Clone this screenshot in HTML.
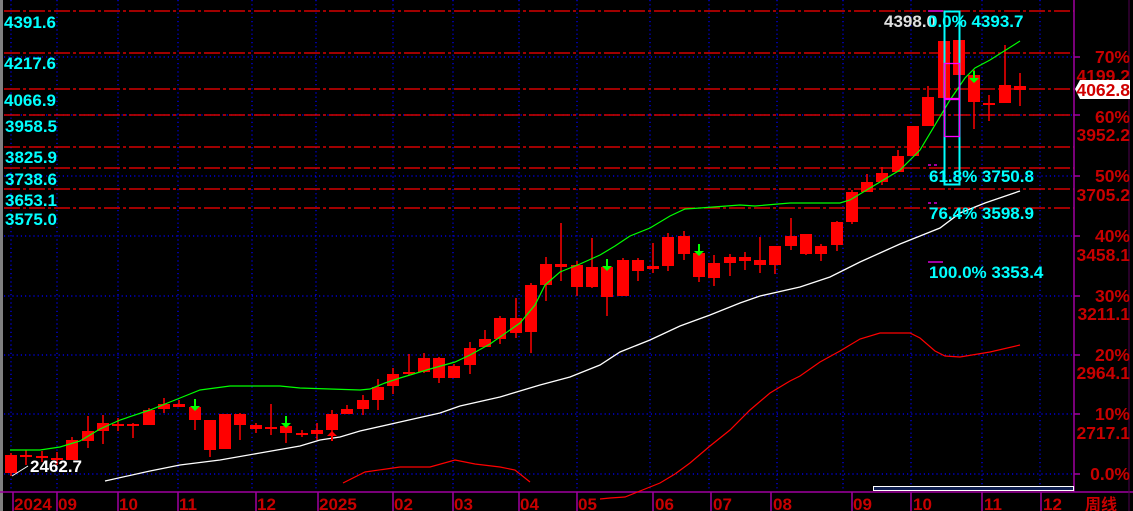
<!DOCTYPE html>
<html><head><meta charset="utf-8"><style>
body{margin:0;background:#000;width:1133px;height:511px;overflow:hidden}
svg{display:block}
text{font-family:"Liberation Sans","Noto Sans CJK SC",sans-serif;font-weight:bold}
.c{fill:#00ffff;font-size:17px}
.r{fill:#c80000;font-size:17.5px;text-anchor:end}
.m{fill:#c80000;font-size:17px}
</style></head><body>
<svg width="1133" height="511" viewBox="0 0 1133 511" xmlns="http://www.w3.org/2000/svg">
<rect width="1133" height="511" fill="#000"/>
<rect x="0" y="0" width="3" height="511" fill="#808080"/>
<g stroke="#0000ff" stroke-width="1.2" stroke-dasharray="1.2,3">
<path d="M4 57H1074M4 115H1074M4 176H1074M4 236H1074M4 296H1074M4 355H1074M4 414H1074M4 474H1074"/>
<path d="M11 0V492M57 0V492M118 0V492M178 0V492M252 0V492M316 0V492M393 0V492M453 0V492M519 0V492M577 0V492M650 0V492M709 0V492M777 0V492M843 0V492M911 0V492M982 0V492M1040 0V492"/>
</g>
<g stroke="#ff0000" stroke-width="1.3" stroke-dasharray="16,3,3,3">
<path d="M4 11H1074M4 53H1074M4 89H1074M4 115H1074M4 147H1074M4 168H1074M4 189H1074M4 208H1074"/>
</g>
<path d="M1074 0V492M0 492H1133" stroke="#a000a0" stroke-width="1.5"/>
<path d="M1129 0V511" stroke="#500050" stroke-width="1"/>
<g stroke="#a000a0" stroke-width="1.5"><path d="M1074 57h6M1074 115h6M1074 176h6M1074 236h6M1074 296h6M1074 355h6M1074 414h6M1074 474h6"/>
<path d="M13 492v19M57 492v19M118 492v19M178 492v19M256 492v19M318 492v19M393 492v19M453 492v19M519 492v19M577 492v19M653 492v19M711 492v19M771 492v19M852 492v19M911 492v19M982 492v19M1041 492v19"/></g>
<polyline fill="none" stroke="#ff0000" stroke-width="1.2" points="343,483 365,472 400,467 430,467 455,460 475,464 500,467 515,470 530,482"/>
<polyline fill="none" stroke="#ff0000" stroke-width="1.2" points="600,499 610,498 625,497 640,491 660,483 675,474 690,463 710,446 730,430 750,410 770,393 790,381 800,376 820,362 840,351 860,339 880,333 910,333 920,338 935,351 945,356 960,357 990,352 1020,345"/>
<polyline fill="none" stroke="#fff" stroke-width="1.3" points="105,481 150,471 180,465 220,460 260,453 300,446 320,440 340,437 360,431 400,422 440,413 460,406 500,397 540,385 570,377 600,365 620,352 650,340 680,326 710,315 740,303 760,296 800,287 830,277 860,262 880,253 900,244 920,236 940,228 960,213 985,203 1020,191"/>
<g fill="#ff0000" stroke="#ff0000" stroke-width="1.5">
<path d="M11 453V476M26 450V465M42 451V462M57 452V465M72 437V460M88 416V448M103 415V444M118 418V431M133 423V438M149 408V425M164 398V413M179 400V407M195 400V430M210 420V457M225 414V449M240 413V440M256 423V433M271 404V435M286 419V443M302 430V437M317 423V440M332 410V441M347 405V414M363 395V415M378 379V410M393 368V394M409 354V375M424 353V373M439 357V383M454 364V378M470 342V374M485 330V347M500 316V344M516 298V338M531 283V353M546 257V301M561 223V281M577 261V296M592 238V288M607 266V316M623 258V296M638 258V281M653 243V273M668 233V271M684 231V260M699 253V282M714 255V286M730 254V276M745 252V270M760 237V273M775 246V274M791 218V250M806 234V255M821 244V261M837 221V251M852 190V224M867 174V192M882 167V185M898 150V172M913 126V156M928 86V126M944 41V98M959 40V75M974 70V129M989 95V121M1005 45V103M1020 73V106"/>
</g>
<g fill="#ff0000">
<rect x="5" y="455" width="12" height="18"/><rect x="20" y="455" width="12" height="2"/><rect x="36" y="456" width="12" height="2"/><rect x="51" y="458" width="12" height="2"/><rect x="66" y="440" width="12" height="20"/><rect x="82" y="431" width="12" height="10"/><rect x="97" y="423" width="12" height="8"/><rect x="112" y="424" width="12" height="2"/><rect x="127" y="424" width="12" height="2"/><rect x="143" y="410" width="12" height="15"/><rect x="158" y="404" width="12" height="5"/><rect x="173" y="404" width="12" height="3"/><rect x="189" y="407" width="12" height="13"/><rect x="204" y="420" width="12" height="30"/><rect x="219" y="414" width="12" height="35"/><rect x="234" y="414" width="12" height="11"/><rect x="250" y="425" width="12" height="4"/><rect x="265" y="427" width="12" height="2"/><rect x="280" y="426" width="12" height="7"/><rect x="296" y="433" width="12" height="2"/><rect x="311" y="430" width="12" height="4"/><rect x="326" y="414" width="12" height="16"/><rect x="341" y="409" width="12" height="5"/><rect x="357" y="400" width="12" height="9"/><rect x="372" y="387" width="12" height="13"/><rect x="387" y="374" width="12" height="12"/><rect x="403" y="372" width="12" height="2"/><rect x="418" y="358" width="12" height="14"/><rect x="433" y="358" width="12" height="20"/><rect x="448" y="366" width="12" height="12"/><rect x="464" y="348" width="12" height="17"/><rect x="479" y="339" width="12" height="8"/><rect x="494" y="318" width="12" height="21"/><rect x="510" y="318" width="12" height="15"/><rect x="525" y="285" width="12" height="47"/><rect x="540" y="264" width="12" height="21"/><rect x="555" y="264" width="12" height="3"/><rect x="571" y="265" width="12" height="22"/><rect x="586" y="267" width="12" height="20"/><rect x="601" y="267" width="12" height="30"/><rect x="617" y="260" width="12" height="36"/><rect x="632" y="260" width="12" height="11"/><rect x="647" y="266" width="12" height="3"/><rect x="662" y="237" width="12" height="29"/><rect x="678" y="236" width="12" height="18"/><rect x="693" y="253" width="12" height="24"/><rect x="708" y="263" width="12" height="15"/><rect x="724" y="257" width="12" height="6"/><rect x="739" y="257" width="12" height="4"/><rect x="754" y="260" width="12" height="5"/><rect x="769" y="246" width="12" height="19"/><rect x="785" y="236" width="12" height="10"/><rect x="800" y="234" width="12" height="20"/><rect x="815" y="246" width="12" height="8"/><rect x="831" y="222" width="12" height="23"/><rect x="846" y="192" width="12" height="30"/><rect x="861" y="182" width="12" height="10"/><rect x="876" y="173" width="12" height="9"/><rect x="892" y="156" width="12" height="16"/><rect x="907" y="126" width="12" height="30"/><rect x="922" y="97" width="12" height="29"/><rect x="938" y="41" width="12" height="57"/><rect x="953" y="40" width="12" height="35"/><rect x="968" y="75" width="12" height="27"/><rect x="983" y="103" width="12" height="2"/><rect x="999" y="85" width="12" height="18"/><rect x="1014" y="86" width="12" height="4"/>
</g>
<polyline fill="none" stroke="#00ff00" stroke-width="1.2" points="10,450 40,450 60,447 80,441 100,429 120,420 150,410 180,398 200,390 230,386 280,386 300,388 360,390 370,389 385,383 400,378 430,369 455,362 470,355 490,344 510,330 520,323 535,305 545,285 560,272 580,264 600,255 615,246 630,236 650,228 670,216 685,209 700,208 740,205 755,206 790,203 840,203 850,200 870,188 900,170 920,150 935,125 950,100 965,78 975,68 990,60 1020,41"/>
<g stroke="#00ff00" stroke-width="2">
<path d="M195 399V407M286 416V424M607 259V267M699 244V252M974 71V79"/>
</g>
<g fill="#00ff00"><path d="M190 406h10l-5 5zM281 423h10l-5 5zM602 266h10l-5 5zM694 251h10l-5 5zM969 78h10l-5 5z"/></g>
<path d="M332 434V441" stroke="#ff0000" stroke-width="2"/><path d="M327 436h10l-5-5z" fill="#ff0000"/>
<rect x="944.5" y="11.5" width="15" height="173" fill="none" stroke="#00ffff" stroke-width="2"/>
<rect x="944.5" y="63.5" width="15" height="35" fill="none" stroke="#ff00ff" stroke-width="1.3"/>
<rect x="944.5" y="99.5" width="15" height="37" fill="none" stroke="#ff00ff" stroke-width="1.3"/>
<path d="M928 165h10M928 203h10" stroke="#ff00ff" stroke-width="1.3" stroke-dasharray="3,3"/>
<path d="M928 262h15M928 11h15" stroke="#ff00ff" stroke-width="1.3"/>
<text class="c" x="4" y="28">4391.6</text>
<text class="c" x="4" y="69">4217.6</text>
<text class="c" x="4" y="106">4066.9</text>
<text class="c" x="5" y="132">3958.5</text>
<text class="c" x="5" y="163">3825.9</text>
<text class="c" x="5" y="185">3738.6</text>
<text class="c" x="5" y="206">3653.1</text>
<text class="c" x="5" y="225">3575.0</text>
<text x="884" y="27" fill="#e0e0e0" style="font-size:17px">4398.0</text>
<text class="c" x="928" y="27">0.0% 4393.7</text>
<text class="c" x="929" y="182">61.8% 3750.8</text>
<text class="c" x="929" y="219">76.4% 3598.9</text>
<text class="c" x="929" y="278">100.0% 3353.4</text>
<path d="M12 476L28 466" stroke="#fff" stroke-width="1"/>
<text x="30" y="472" fill="#fff" style="font-size:17px">2462.7</text>
<text class="r" x="1130" y="63">70%</text>
<text class="r" x="1130" y="82">4199.2</text>
<path d="M1075 89l5-9h50v19h-50z" fill="#fff"/>
<text class="r" x="1130" y="96" style="fill:#d00000">4062.8</text>
<text class="r" x="1130" y="123">60%</text>
<text class="r" x="1130" y="141">3952.2</text>
<text class="r" x="1130" y="182">50%</text>
<text class="r" x="1130" y="201">3705.2</text>
<text class="r" x="1130" y="242">40%</text>
<text class="r" x="1130" y="261">3458.1</text>
<text class="r" x="1130" y="302">30%</text>
<text class="r" x="1130" y="320">3211.1</text>
<text class="r" x="1130" y="361">20%</text>
<text class="r" x="1130" y="379">2964.1</text>
<text class="r" x="1130" y="420">10%</text>
<text class="r" x="1130" y="439">2717.1</text>
<text class="r" x="1130" y="480">0.0%</text>
<rect x="873.5" y="486.5" width="200" height="4" fill="#102050" stroke="#fff" stroke-width="1"/>
<g>
<text class="m" x="14" y="510">2024</text><text class="m" x="58" y="510">09</text><text class="m" x="119" y="510">10</text><text class="m" x="179" y="510">11</text><text class="m" x="257" y="510">12</text><text class="m" x="319" y="510">2025</text><text class="m" x="394" y="510">02</text><text class="m" x="454" y="510">03</text><text class="m" x="520" y="510">04</text><text class="m" x="578" y="510">05</text><text class="m" x="655" y="510">06</text><text class="m" x="713" y="510">07</text><text class="m" x="773" y="510">08</text><text class="m" x="853" y="510">09</text><text class="m" x="913" y="510">10</text><text class="m" x="984" y="510">11</text><text class="m" x="1043" y="510">12</text><text class="m" x="1085" y="510" style="font-size:16px">周线</text>
</g>
</svg>
</body></html>
